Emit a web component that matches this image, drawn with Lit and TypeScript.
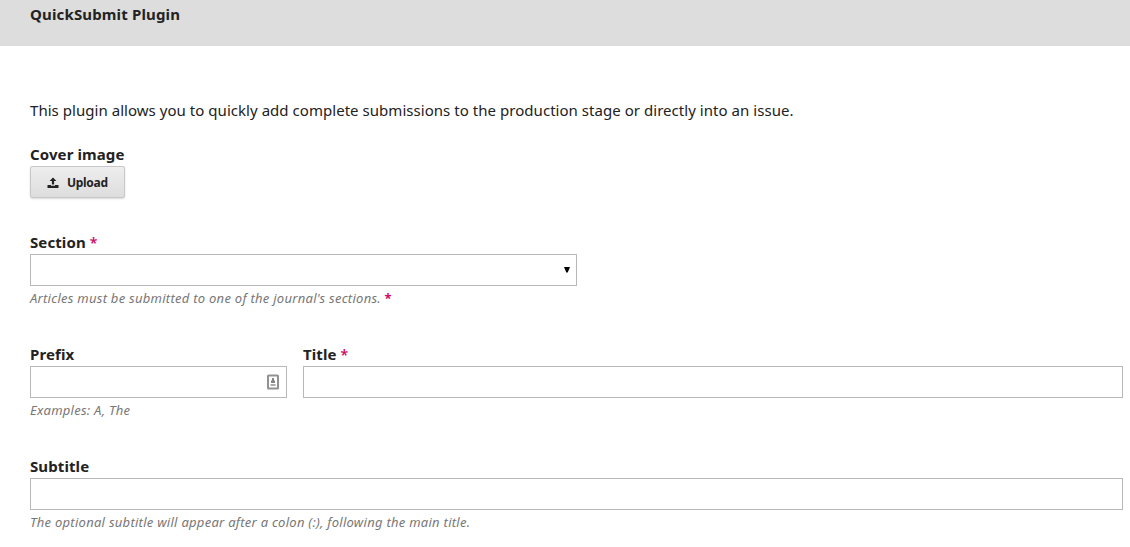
import { LitElement, html, css, nothing } from "lit";
import { customElement, property } from "lit/decorators.js";

@customElement("form-field")
class FormField extends LitElement {
  @property() label = "";
  @property({ type: Boolean }) required = false;

  static styles = css`
    :host { display: block; min-width: 0; }
    .label { display: block; height: 24px; line-height: 24px; font-weight: 700; font-size: 15px; letter-spacing: .1px; color: #222; white-space: nowrap; }
    .req { color: #d00a6c; font-weight: 600; font-size: 14px; line-height: 1; }
  `;

  render() {
    return html`<span class="label">${this.label}${this.required ? html` <span class="req">*</span>` : nothing}</span><slot></slot>`;
  }
}

@customElement("app-root")
class AppRoot extends LitElement {
  static styles = css`
    :host { display: block; height: 547px; overflow: hidden; background: #fff; color: #222;
      font-family: "Noto Sans", "Open Sans", sans-serif; font-size: 15px; line-height: 24px; }
    * { box-sizing: border-box; }
    .header { height: 46px; padding: 2px 30px 0; background: #ddd; }
    h1 { margin: 0; font-size: 15px; line-height: 24px; font-weight: 700; letter-spacing: .15px; }
    h1 span, .intro span, .desc span { white-space: nowrap; }
    form { display: flex; flex-direction: column; gap: 32px; padding: 52px 7px 0 30px; }
    .intro { margin: 0 0 -12px; letter-spacing: .04px; }
    .box { height: 32px; border: 1px solid #b8b8b8; background: #fff; display: flex; align-items: center; justify-content: flex-end; }
    .half { width: 547px; padding: 0 5px 1px 0; }
    .contact { padding-right: 7px; }
    svg { display: block; }
    .row { display: grid; grid-template-columns: 257px 820px; gap: 16px; }
    .desc { height: 24px; font-size: 13px; letter-spacing: .27px; font-style: italic; color: #777; }
    .star { color: #d00a6c; font-style: normal; font-weight: 700; }
    button { display: flex; align-items: center; gap: 8px; width: 95px; height: 32px; padding: 1px 0 0 16px;
      border: 1px solid #c8c8c8; border-radius: 2px; background: linear-gradient(#eee, #ddd);
      box-shadow: 0 1px 2px rgba(0,0,0,.15); font: 700 12px/30px "Noto Sans", sans-serif; letter-spacing: -.3px; color: #222; }
  `;

  render() {
    return html`
      <header class="header"><h1><span>QuickSubmit Plugin</span></h1></header>
      <form>
        <p class="intro"><span>This plugin allows you to quickly add complete submissions to the production stage or directly into an issue.</span></p>
        <form-field label="Cover image">
          <button type="button">
            <svg width="12" height="12" viewBox="0 0 12 12" fill="#222"><path d="M6 .5 9.400 4H7.100V7.500H4.900V4H2.600zM.5 8H4v.8h4V8h3.500v3H.5z"/></svg>
            <span>Upload</span>
          </button>
        </form-field>
        <form-field label="Section" required>
          <div class="box half"><svg width="8" height="7" viewBox="0 0 8 7"><path d="M1 1h6L4.700 6.500H3.300z"/></svg></div>
          <div class="desc"><span>Articles must be submitted to one of the journal's sections. <span class="star">*</span></span></div>
        </form-field>
        <div class="row">
          <form-field label="Prefix">
            <div class="box contact">
              <svg width="12" height="16" viewBox="0 0 12 16"><rect x="1" y="1.500" width="10" height="13" rx=".5" fill="#fff" stroke="#919191" stroke-width="2"/><path d="M5 4h2v2.500h1V9H4V6.500h1z" fill="#858585"/><path d="M3.500 10h5v2h-5z" fill="#aaa"/></svg>
            </div>
            <div class="desc"><span>Examples: A, The</span></div>
          </form-field>
          <form-field label="Title" required><div class="box"></div></form-field>
        </div>
        <form-field label="Subtitle">
          <div class="box"></div>
          <div class="desc"><span>The optional subtitle will appear after a colon (:), following the main title.</span></div>
        </form-field>
      </form>
    `;
  }
}
